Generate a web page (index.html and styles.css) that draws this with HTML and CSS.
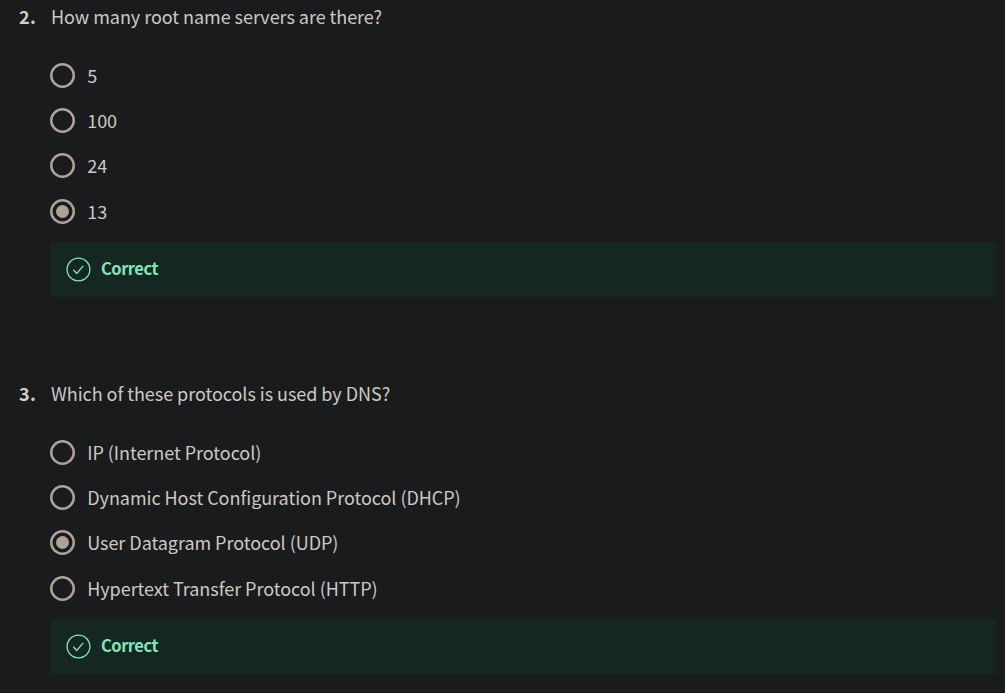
FILE: index.html
```html
<!DOCTYPE html>
<html lang="en">
<head>
<meta charset="utf-8">
<title>DNS quiz</title>
<link rel="stylesheet" href="styles.css">
</head>
<body>
<main class="quiz">
  <section class="question">
    <div class="number">2.</div>
    <div class="body">
      <p class="prompt">How many root name servers are there?</p>
      <ul class="options">
        <li class="option"><span class="radio"></span><span class="label">5</span></li>
        <li class="option"><span class="radio"></span><span class="label">100</span></li>
        <li class="option"><span class="radio"></span><span class="label">24</span></li>
        <li class="option"><span class="radio checked"></span><span class="label">13</span></li>
      </ul>
      <div class="feedback">
        <svg class="tick" viewBox="0 0 25 25" fill="none" stroke="currentColor" stroke-width="1.3"><circle cx="12.5" cy="12.5" r="11.4"/><path d="M7.3 12.7l3.5 3.8 6.4-7.7"/></svg>
        <span class="verdict">Correct</span>
      </div>
    </div>
  </section>
  <section class="question">
    <div class="number">3.</div>
    <div class="body">
      <p class="prompt">Which of these protocols is used by DNS?</p>
      <ul class="options">
        <li class="option"><span class="radio"></span><span class="label">IP (Internet Protocol)</span></li>
        <li class="option"><span class="radio"></span><span class="label">Dynamic Host Configuration Protocol (DHCP)</span></li>
        <li class="option"><span class="radio checked"></span><span class="label">User Datagram Protocol (UDP)</span></li>
        <li class="option"><span class="radio"></span><span class="label">Hypertext Transfer Protocol (HTTP)</span></li>
      </ul>
      <div class="feedback">
        <svg class="tick" viewBox="0 0 25 25" fill="none" stroke="currentColor" stroke-width="1.3"><circle cx="12.5" cy="12.5" r="11.4"/><path d="M7.3 12.7l3.5 3.8 6.4-7.7"/></svg>
        <span class="verdict">Correct</span>
      </div>
    </div>
  </section>
</main>
</body>
</html>
```
FILE: styles.css
```css
* { box-sizing: border-box; }
body {
  margin: 0;
  background: #1a1b1d;
  color: #ccc9c2;
  font: 18px/30px "Noto Sans CJK SC", "Noto Sans", sans-serif;
  letter-spacing: -0.045px;
}
.quiz {
  height: 693px;
  padding: 1px 9px 0 19px;
  border-bottom: 1px solid #151017;
}
.question {
  display: grid;
  grid-template-columns: 32px 1fr;
}
.question + .question { margin-top: 81px; }
.number { font-weight: 700; color: #d3d0c9; letter-spacing: 0.3px; }
.prompt { margin: 0 0 22px; white-space: nowrap; }
.options { margin: 0; padding: 0; list-style: none; }
.option {
  display: flex;
  align-items: center;
  gap: 12.5px;
  height: 45px;
  margin-left: -1.3px;
}
.option:last-child { height: 47px; }
.radio {
  display: flex;
  align-items: center;
  justify-content: center;
  width: 25px;
  height: 25px;
  border-radius: 50%;
  box-shadow: inset 0 0 0 2.5px #aca297;
}
.checked::after {
  content: "";
  width: 13px;
  height: 13px;
  border-radius: 50%;
  background: #aca297;
}
.label { padding-bottom: 1px; white-space: nowrap; }
.feedback {
  display: flex;
  align-items: center;
  gap: 10px;
  height: 55px;
  margin-top: 7px;
  padding-left: 15px;
  background: #152721;
  color: #82e4b8;
}
.tick { width: 25px; height: 25px; }
.verdict { padding-bottom: 3px; font-size: 16.5px; font-weight: 700; letter-spacing: -0.5px; }
```
